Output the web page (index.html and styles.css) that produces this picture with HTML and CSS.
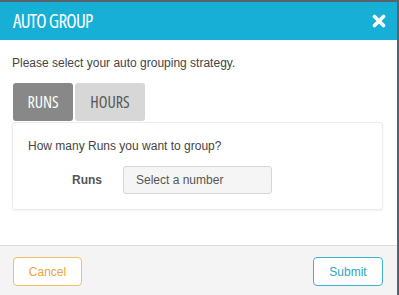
FILE: index.html
```html
<!DOCTYPE html>
<html>
<head>
    <meta charset="UTF-8">
    <title>Auto Group</title>
    <link rel="stylesheet" href="styles.css">
</head>
<body>
    <div class="dialog">
        <div class="dialog-header">
            <span class="dialog-title">AUTO GROUP</span>
            <span class="close-icon">
                <svg width="14" height="14" viewBox="0 0 14 14">
                    <path d="M2.5 2.5 L11.5 11.5 M11.5 2.5 L2.5 11.5" stroke="#fff" stroke-width="3.6" stroke-linecap="round" fill="none"/>
                </svg>
            </span>
        </div>

        <div class="dialog-body">
            <p class="intro">Please select your auto grouping strategy.</p>
            <div class="tabs">
                <button class="tab active">RUNS</button>
                <button class="tab">HOURS</button>
            </div>
            <div class="tab-card">
                <p class="question">How many Runs you want to group?</p>
                <div class="form-row">
                    <label class="form-label">Runs</label>
                    <div class="select-box">Select a number</div>
                </div>
            </div>
        </div>

        <div class="dialog-footer">
            <button class="btn cancel">Cancel</button>
            <button class="btn submit">Submit</button>
        </div>
    </div>
</body>
</html>
```
FILE: styles.css
```css
* {
    box-sizing: border-box;
}

body {
    margin: 0;
    background-color: #56646a;
    font-family: "Liberation Sans", Arial, sans-serif;
    font-size: 12px;
    color: #444;
}

.dialog {
    margin-top: 2px;
    width: 397px;
    height: 293px;
    background-color: #fff;
    display: flex;
    flex-direction: column;
}

.dialog-header {
    height: 38px;
    background-color: #17afd6;
    display: flex;
    justify-content: space-between;
    align-items: center;
    padding: 0 11px 0 13px;
}

.dialog-title,
.tab {
    font-family: "Open Sans", sans-serif;
    font-stretch: 75%;
    font-weight: 400;
}

.dialog-title {
    color: #fff;
    font-size: 19px;
    letter-spacing: -0.7px;
}

.close-icon {
    display: flex;
}

.dialog-body {
    flex: 1;
    padding: 15px 14px 0 12px;
}

.intro {
    margin: 0 0 12px;
    line-height: 16px;
}

.tabs {
    display: flex;
    gap: 2px;
    margin-left: 1px;
}

.tab {
    width: 60px;
    height: 38px;
    border: none;
    border-radius: 3px;
    font-size: 16px;
    padding: 0;
    cursor: pointer;
    background-color: #d7d7d7;
    color: #555;
}

.tab + .tab {
    width: 70px;
}

.tab.active {
    background-color: #888;
    color: #fff;
}

.tab-card {
    margin-top: 1px;
    border: 1px solid #ececec;
    border-radius: 3px;
    box-shadow: 0 1px 2px rgba(0, 0, 0, 0.06);
    padding: 15px 16px 15px 15px;
}

.question {
    margin: 0 0 12px;
    line-height: 16px;
}

.form-row {
    display: flex;
    align-items: center;
}

.form-label {
    width: 74px;
    margin-right: 21px;
    text-align: right;
    font-weight: bold;
    color: #555;
}

.select-box {
    width: 149px;
    height: 28px;
    line-height: 26px;
    padding-left: 12px;
    border: 1px solid #d6d6d6;
    border-radius: 3px;
    background-color: #f5f5f5;
    color: #555;
}

.dialog-footer {
    height: 50px;
    border-top: 1px solid #dcdcdc;
    background-color: #f4f4f4;
    display: flex;
    justify-content: space-between;
    align-items: flex-start;
    padding: 11px 14px 0 13px;
}

.btn {
    height: 29px;
    border-radius: 4px;
    background-color: #fff;
    font-family: "Liberation Sans", Arial, sans-serif;
    font-size: 12px;
    padding: 0;
    cursor: pointer;
}

.btn.cancel {
    width: 69px;
    border: 1px solid #f0c068;
    color: #eba441;
}

.btn.submit {
    width: 70px;
    border: 1px solid #3fb3cf;
    color: #2ea6c4;
}
```
